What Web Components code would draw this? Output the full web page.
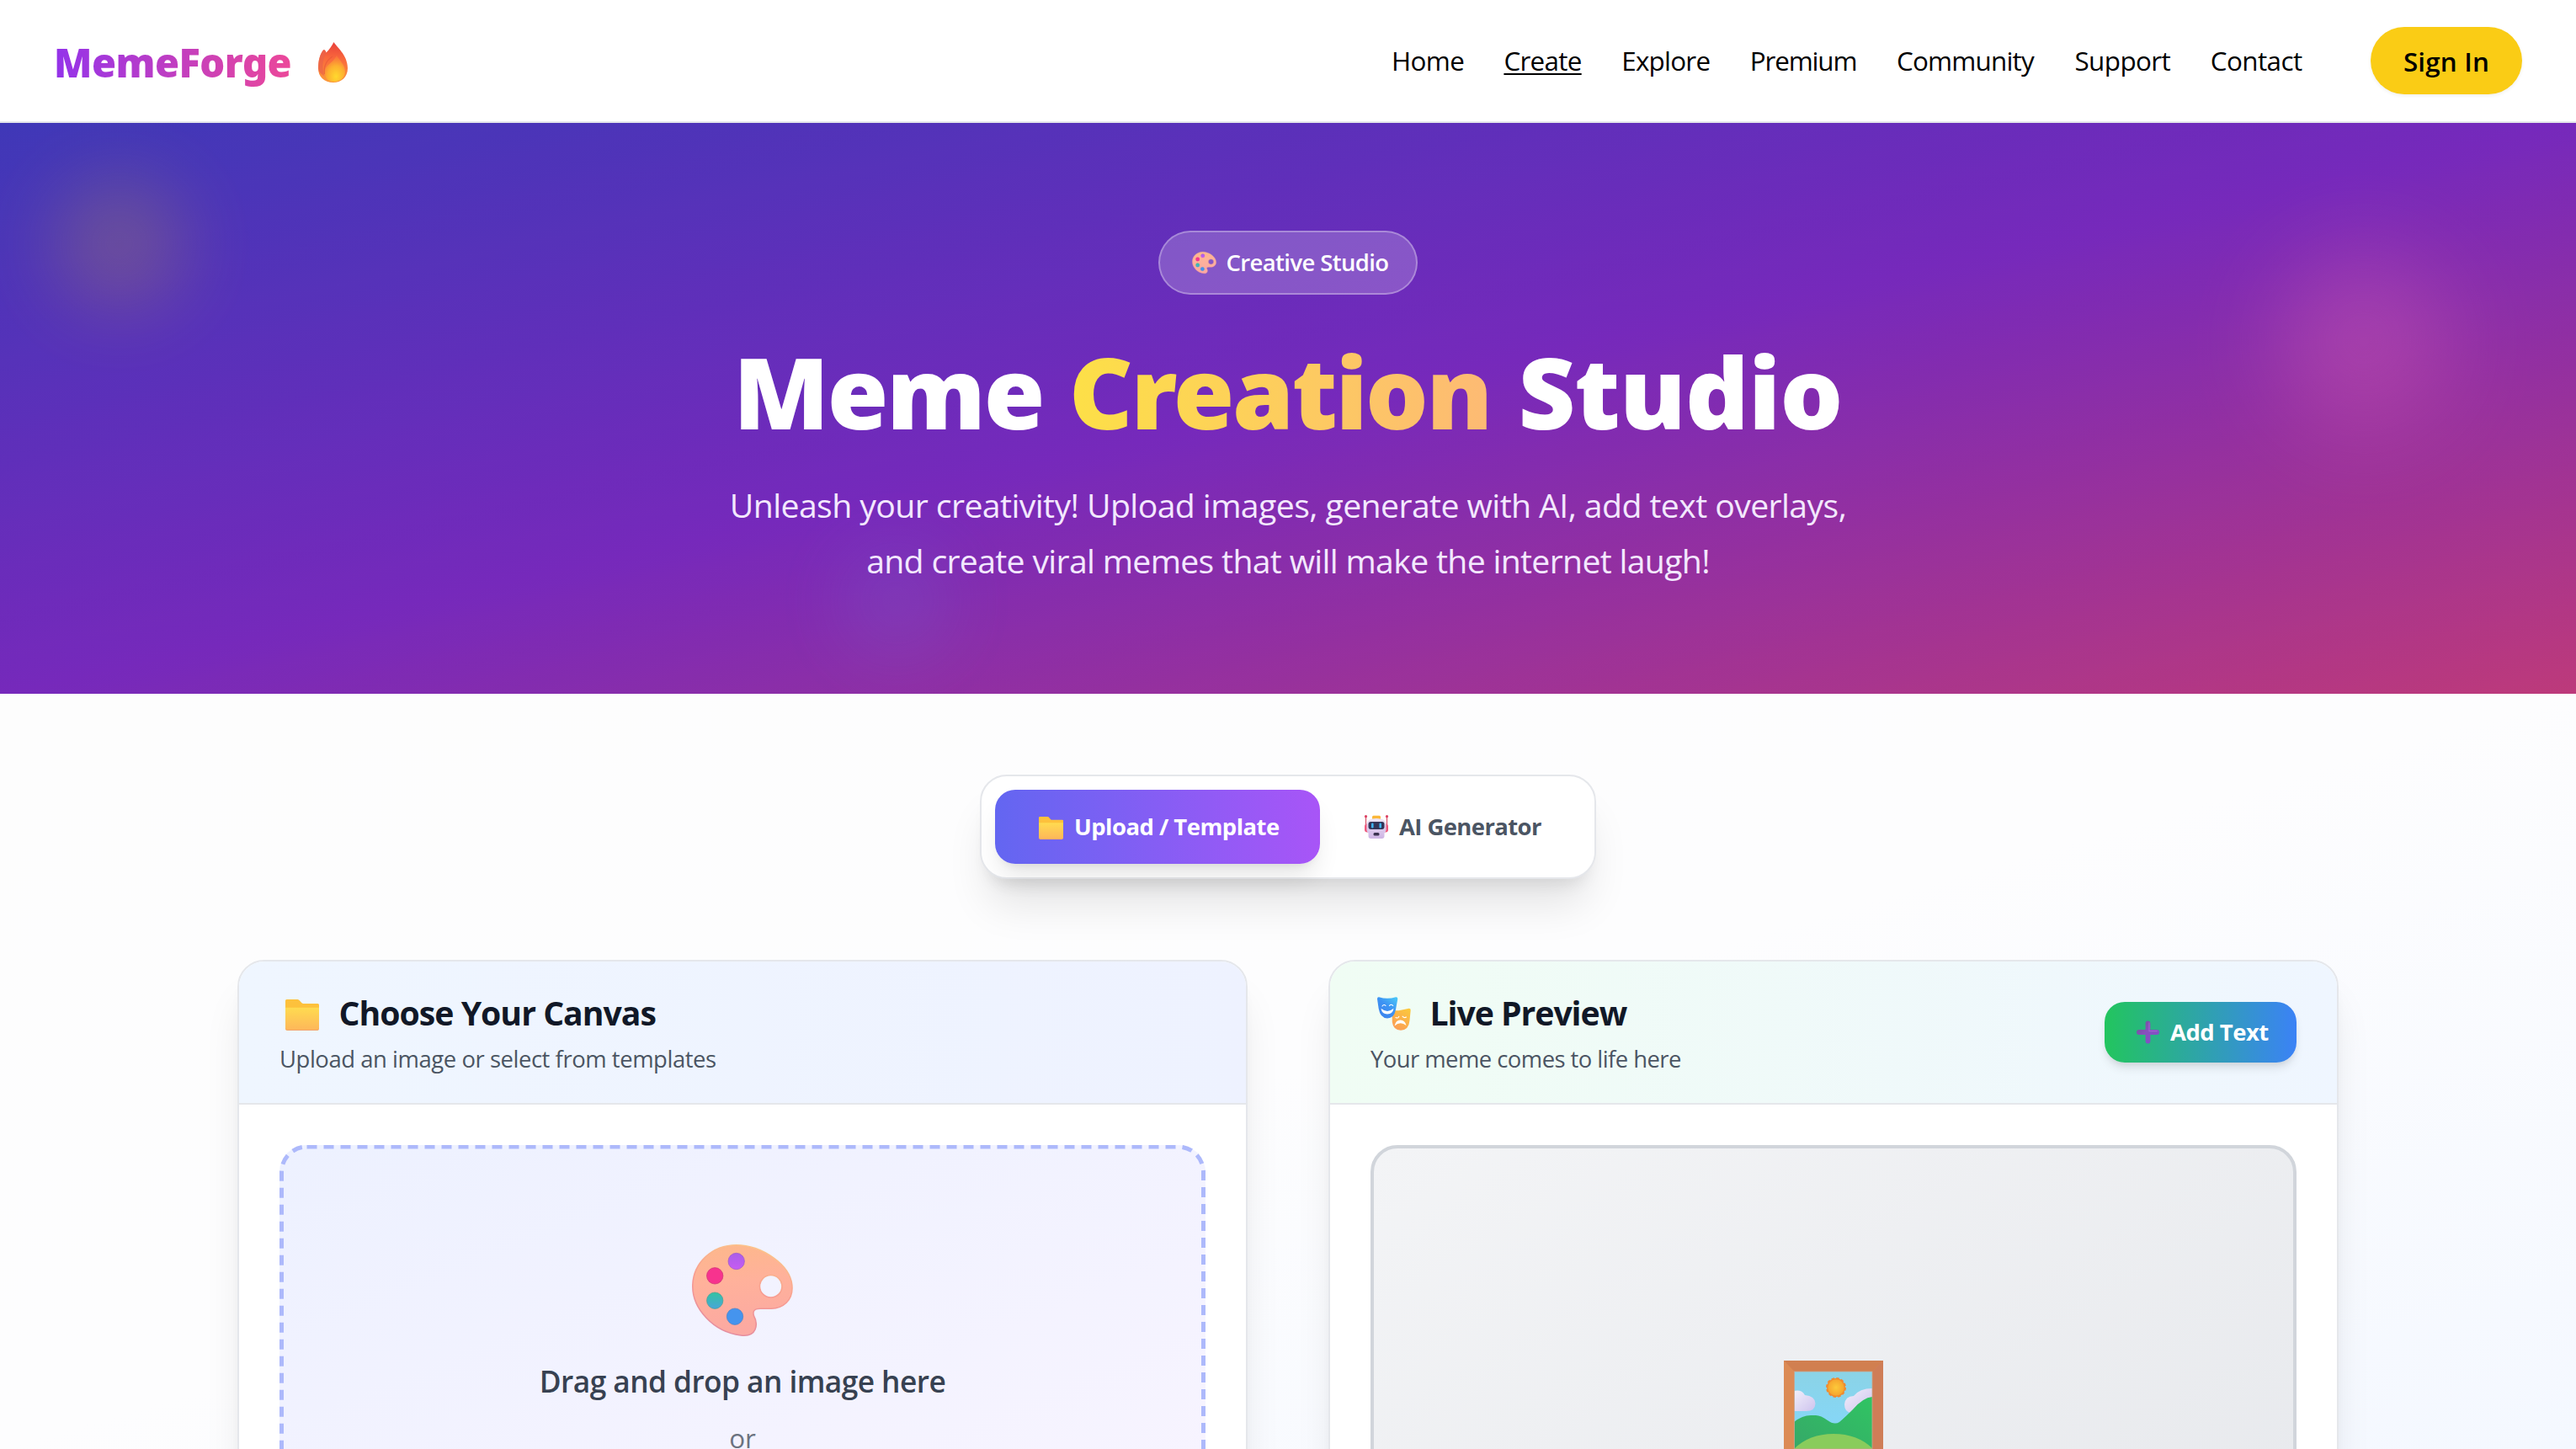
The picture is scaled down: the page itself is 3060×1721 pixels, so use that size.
<!DOCTYPE html>
<html lang="en">
<head>
<meta charset="utf-8">
<title>MemeForge – Meme Creation Studio</title>
<style>
  html, body { margin: 0; height: 1721px; overflow: hidden; }
  body { font-family: "Open Sans", "Noto Sans", sans-serif; color: #111827; background: #fff; }
</style>
</head>
<body>
<mf-app></mf-app>
<script>
const define = (name, markup, setup) => {
  const tpl = document.createElement('template');
  tpl.innerHTML = markup;
  customElements.define(name, class extends HTMLElement {
    constructor() {
      super();
      this.attachShadow({ mode: 'open' }).append(tpl.content.cloneNode(true));
    }
    connectedCallback() { if (setup) setup(this, this.shadowRoot); }
  });
};

/* ---------- icons ---------- */
const ICONS = {
  fire: `<svg viewBox="0 0 35 48"><defs>
    <linearGradient id="a" x1=".5" y1="0" x2=".45" y2="1"><stop offset="0" stop-color="#e8403c"/><stop offset=".4" stop-color="#f9683c"/><stop offset="1" stop-color="#fb9a3a"/></linearGradient>
    <radialGradient id="b" cx=".55" cy=".8" r=".75"><stop offset="0" stop-color="#ffd92e"/><stop offset=".55" stop-color="#fdb02f"/><stop offset="1" stop-color="#fb8038" stop-opacity=".6"/></radialGradient></defs>
    <path d="M18.500 0C21 5 35 15 35 31C35 42 27 48 18 48C7 48 0 41 0 31C0 23 2 14 6 9.500C8 8.500 9 11 9.500 12.500C13 9 16 5 18.500 0Z" fill="url(#a)"/>
    <path d="M6 9.500C8 8.500 9 11 9.500 12.500C6 19 4 27 7 40C2 37 0 34 0 30C0 22 2 14 6 9.500Z" fill="#ea6248" opacity=".7"/>
    <path d="M17 17C11 21 6 28 7.500 38" stroke="#e8583a" stroke-width="1.300" fill="none" opacity=".7"/>
    <path d="M22 16C25 21 32 27 32 35C32 42 26 47 19 47C11 47 7 42 8 34C9 27 17 25 22 16Z" fill="url(#b)"/></svg>`,
  palette: `<svg viewBox="0 0 120 109"><defs>
    <linearGradient id="a" x1=".4" y1="0" x2=".5" y2="1"><stop offset="0" stop-color="#fdb78c"/><stop offset=".4" stop-color="#ffb19b"/><stop offset="1" stop-color="#fba8a2"/></linearGradient>
    <linearGradient id="e" x1=".6" y1="0" x2=".3" y2="1"><stop offset="0" stop-color="#fcc488"/><stop offset=".5" stop-color="#f79a92"/><stop offset="1" stop-color="#e28ca0"/></linearGradient>
    <linearGradient id="t" x1="0" y1="0" x2="0" y2="1"><stop offset="0" stop-color="#34c3a2"/><stop offset="1" stop-color="#48a6d8"/></linearGradient>
    <linearGradient id="p" x1="0" y1="0" x2="0" y2="1"><stop offset="0" stop-color="#a95ee8"/><stop offset="1" stop-color="#c65cf4"/></linearGradient></defs>
    <path d="M52.700 .8C82 .8 119 24 119 52C119 66 109 76 94 76.300H81C73 76.500 72 80 73.500 85C77 91 77 96 75 101C72 108 66 109 58 108C25 104 .8 76 .8 50C.8 22 24 .8 52.700 .8ZM93.700 36.500A13.200 13.200 0 1 0 93.700 63A13.200 13.200 0 1 0 93.700 36.500Z" fill="url(#a)" fill-rule="evenodd" stroke="url(#e)" stroke-width="1.600"/>
    <circle cx="52.700" cy="20" r="9.700" fill="url(#p)" stroke="#9a58c8" stroke-width=".7"/><circle cx="27.200" cy="37.300" r="9.700" fill="#f7338e" stroke="#cc3573" stroke-width=".7"/>
    <circle cx="27.200" cy="66.700" r="9.700" fill="url(#t)" stroke="#4a9d92" stroke-width=".7"/><circle cx="51" cy="85.700" r="9.700" fill="#4594ee" stroke="#4a7fc4" stroke-width=".7"/></svg>`,
  folder: `<svg viewBox="0 0 40 37"><defs>
    <linearGradient id="a" x1="0" y1="0" x2="0" y2="1"><stop offset="0" stop-color="#ffdb50"/><stop offset="1" stop-color="#fdb65a"/></linearGradient></defs>
    <path d="M1.500 0H14.500Q16 0 17 1.500L19.500 4.200Q20.300 5 21.500 5H38.500Q40 5 40 6.500V20H0V1.500Q0 0 1.500 0Z" fill="#fdc13c"/>
    <path d="M0 9.800H40V34.500Q40 37 37.500 37H2.500Q0 37 0 34.500Z" fill="url(#a)"/>
    <path d="M.6 35.200Q1.200 36.500 2.500 36.500H37.500Q38.800 36.500 39.400 35.200" stroke="#f3a56c" stroke-width="1" fill="none"/></svg>`,
  robot: `<svg viewBox="0 0 28 28"><defs>
    <linearGradient id="a" x1="0" y1="0" x2="0" y2="1"><stop offset="0" stop-color="#efe6f6"/><stop offset="1" stop-color="#cdb4e4"/></linearGradient></defs>
    <path d="M1.500 2V12M26.500 2V12" stroke="#d9596f" stroke-width="1.300"/><circle cx="1.500" cy="1.700" r="1.600" fill="#dd4364"/><circle cx="26.500" cy="1.700" r="1.600" fill="#dd4364"/>
    <rect x="0" y="10.500" width="28" height="10" rx="3" fill="#ee5a7d"/>
    <rect x="9" y=".8" width="10" height="5" rx="1.500" fill="#fbb83a"/>
    <path d="M2.500 11Q2.500 4 14 4T25.500 11V18Q25 20.500 23.500 21.500V25Q23.500 28 20.500 28H7.500Q4.500 28 4.500 25V21.500Q3 20.500 2.500 18Z" fill="url(#a)"/>
    <rect x="4.500" y="8" width="19" height="9" rx="3" fill="#343457"/>
    <rect x="8" y="9.500" width="2.600" height="6" rx="1.300" fill="#3fb3f0"/><rect x="17.400" y="9.500" width="2.600" height="6" rx="1.300" fill="#3fb3f0"/>
    <rect x="10.500" y="21" width="7" height="3.400" rx="1.500" fill="#3b3350"/></svg>`,
  masks: `<svg viewBox="0 0 40 40"><defs>
    <linearGradient id="a" x1="1" y1="0" x2=".2" y2="1"><stop offset="0" stop-color="#4ccdf8"/><stop offset=".5" stop-color="#3d93f3"/><stop offset="1" stop-color="#3c82ec"/></linearGradient>
    <linearGradient id="b" x1=".9" y1="0" x2=".3" y2="1"><stop offset="0" stop-color="#fbc93c"/><stop offset="1" stop-color="#fb9e56"/></linearGradient></defs>
    <path d="M17.500 15.500Q22 17 28 15.800Q33 15 37.500 13.800Q39.800 13.500 39.700 16L38.500 28Q37.500 39.500 28 39.700Q19 39.500 17.800 30Z" fill="url(#b)"/>
    <path d="M2 .2Q12 3.500 22 .2Q24.500 0 24.300 2.500L22 15Q20 25.500 12 25.500Q3.500 25 1.700 14L0 2.500Q0 0 2 .2Z" fill="url(#a)"/>
    <g fill="none" stroke="#fff" stroke-linecap="round"><path d="M6 11Q8 8.300 10 10.500M14.500 10.500Q16.500 8 18.700 10.500" stroke-width="1.100"/><path d="M22 24.500Q24.500 26 25.800 23.200M30 23.200Q32 25.500 34.500 24" stroke-width="1.100"/></g>
    <path d="M4.500 13.800Q12 20 19.500 13.800Q18.500 20.500 12 20.500Q5.500 20.500 4.500 13.800Z" fill="#fff"/>
    <path d="M20.500 34.500Q22 27.500 27.500 27.500Q33 27.500 34.500 34Q27.500 28.500 20.500 34.500Z" fill="#fff"/></svg>`,
  plus: `<svg viewBox="0 0 28 28"><defs>
    <linearGradient id="a" gradientUnits="userSpaceOnUse" x1="0" y1="0" x2="28" y2="28"><stop offset="0" stop-color="#6d5590"/><stop offset=".45" stop-color="#8750bd"/><stop offset="1" stop-color="#7d51cc"/></linearGradient></defs>
    <path d="M11 3Q11 0 14 0T17 3V11H25Q28 11 28 14T25 17H17V25Q17 28 14 28T11 25V17H3Q0 17 0 14T3 11H11Z" fill="url(#a)"/>
    <path d="M15.500 2V12.500H25.500" stroke="#a968d6" stroke-width="1.200" fill="none" opacity=".7"/></svg>`,
  picture: `<svg viewBox="0 0 118 118"><defs>
    <linearGradient id="s" x1="0" y1="0" x2="0" y2="1"><stop offset="0" stop-color="#8bd3e6"/><stop offset=".6" stop-color="#86d6f5"/></linearGradient>
    <linearGradient id="g" x1="1" y1="0" x2="0" y2="1"><stop offset="0" stop-color="#30c463"/><stop offset="1" stop-color="#36a868"/></linearGradient>
    <linearGradient id="c" x1="0" y1="0" x2="1" y2="1"><stop offset="0" stop-color="#f2effa"/><stop offset="1" stop-color="#cdc3ee"/></linearGradient>
    <radialGradient id="u"><stop offset="0" stop-color="#fcc93a"/><stop offset="1" stop-color="#f6a32e"/></radialGradient>
    <clipPath id="k"><rect x="12.500" y="13" width="92.500" height="92"/></clipPath></defs>
    <rect width="118" height="118" fill="#d98856"/>
    <path d="M0 0H118L105 13H12.500Z" fill="#d17f50"/><path d="M118 0V118L105 105V13Z" fill="#cf7d57"/><path d="M0 0L12.500 13V105L0 118Z" fill="#dc8b55"/><path d="M0 118L12.500 105H105L118 118Z" fill="#c9744c"/>
    <g clip-path="url(#k)"><rect x="12" y="13" width="94" height="93" fill="url(#s)"/>
    <path d="M12 36Q21 34 25 41Q37 42 37.500 51Q37 60 27 60H12Z" fill="url(#c)"/>
    <path d="M72 52Q73 42 83 42Q90 33 105 33V62H79Q72 60 72 52Z" fill="url(#c)"/>
    <path d="M12 73Q22 65 32 65H38Q44 65 52 71Q60 77 66 73Q73 67 82 58Q94 44 105 43V106H12Z" fill="url(#g)"/>
    <path d="M12 105Q30 87 59 87Q88 87 106 105V118H12Z" fill="#89cc5c"/></g>
    <circle cx="62" cy="32" r="10.700" fill="none" stroke="#ee8a35" stroke-width="2.600" stroke-dasharray="3.400 2.200"/><circle cx="62" cy="32" r="10.300" fill="url(#u)" stroke="#f08a2e" stroke-width="1.200"/>
    <rect x="12.500" y="13" width="92.500" height="92" fill="none" stroke="#c8a58c" stroke-width=".8"/></svg>`
};
define('mf-icon', `<style>
  :host { display: inline-block; flex: none; }
  div { width: 100%; height: 100%; }
  svg { display: block; width: 100%; height: 100%; overflow: visible; }
</style><div></div>`, (el, root) => {
  root.querySelector('div').innerHTML = ICONS[el.getAttribute('name')];
});

/* ---------- header ---------- */
define('mf-nav-link', `<style>
  :host { display: block; font-size: 31.400px; line-height: 48px; color: #000; white-space: nowrap; }
  :host([active]) { text-decoration: underline; text-decoration-thickness: 2px; text-underline-offset: 3px; }
</style><slot></slot>`);

define('mf-header', `<style>
  :host { display: flex; align-items: center; justify-content: space-between; box-sizing: border-box;
          height: 146px; padding: 0 64px 0 64px; background: #fff; border-bottom: 2px solid #e5e7eb; }
  .logo { display: flex; align-items: center; gap: 32px; padding-top: 4px; }
  .name { font: 900 47px/64px "Noto Sans", sans-serif; letter-spacing: -.5px; color: transparent;
          background: linear-gradient(to right, #9333ea, #ec4899); background-clip: text; -webkit-background-clip: text; }
  .fire { width: 35px; height: 48px; }
  .right { display: flex; align-items: center; gap: 81.500px; }
  nav { display: flex; gap: 47.600px; }
  button { all: unset; box-sizing: border-box; width: 180px; height: 80px; border-radius: 40px; background: #facc15;
           text-align: center; font-size: 31.400px; font-weight: 600; letter-spacing: .17px; color: #000;
           box-shadow: 0 2px 4px rgba(0,0,0,.06); }
</style>
<div class="logo"><span class="name">MemeForge</span><mf-icon class="fire" name="fire"></mf-icon></div>
<div class="right">
  <nav>
    <mf-nav-link style="letter-spacing:-.6px;margin-right:-.5px">Home</mf-nav-link>
    <mf-nav-link active style="letter-spacing:-.7px">Create</mf-nav-link>
    <mf-nav-link style="letter-spacing:-.77px">Explore</mf-nav-link>
    <mf-nav-link style="letter-spacing:-1.160px">Premium</mf-nav-link>
    <mf-nav-link style="letter-spacing:-.8px;margin-right:1px">Community</mf-nav-link>
    <mf-nav-link style="letter-spacing:-.58px">Support</mf-nav-link>
    <mf-nav-link style="letter-spacing:-.58px">Contact</mf-nav-link>
  </nav>
  <button>Sign In</button>
</div>`);

/* ---------- hero ---------- */
define('mf-hero', `<style>
  :host { display: flex; flex-direction: column; align-items: center; position: relative; overflow: hidden;
          box-sizing: border-box; height: 678px; padding-top: 128px; text-align: center; color: #fff;
          background: linear-gradient(rgba(0,0,0,.2), rgba(0,0,0,.2)), linear-gradient(to bottom right, #4f46e5, #9333ea, #ec4899); }
  .blob { position: absolute; border-radius: 50%; }
  .y { left: 66px; top: 68px; width: 152px; height: 152px; background: #facc15; opacity: .19; filter: blur(46px); }
  .p { left: 2704px; top: 156px; width: 208px; height: 208px; background: #f472b6; opacity: .27; filter: blur(56px); }
  .b { left: 1001px; top: 504px; width: 128px; height: 128px; background: #60a5fa; opacity: .12; filter: blur(44px); }
  .badge { display: flex; align-items: center; justify-content: center; gap: 12px; box-sizing: border-box; width: 308px; height: 76px;
           padding-left: 5px; border: 2px solid rgba(255,255,255,.3); border-radius: 38px; background: rgba(255,255,255,.2);
           font-size: 27.440px; font-weight: 600; letter-spacing: -.6px; position: relative; }
  .badge mf-icon { width: 29px; height: 26px; }
  .badge span { margin-top: -2px; }
  h1 { margin: 54px 0 0; font: 900 117.600px/120px "Noto Sans", sans-serif; white-space: nowrap; position: relative; }
  h1 span { display: inline-block; }
  .g { color: transparent; background: linear-gradient(to right, #fde047, #fdba74); background-clip: text; -webkit-background-clip: text; }
  p { margin: 43px 0 0; font-size: 39.200px; line-height: 66px; color: #f3e8ff; position: relative; }
</style>
<div class="blob y"></div><div class="blob p"></div><div class="blob b"></div>
<div class="badge"><mf-icon name="palette"></mf-icon><span>Creative Studio</span></div>
<h1><span style="letter-spacing:-2.200px">Meme</span> <span class="g" style="letter-spacing:-2.500px">Creation</span> <span style="letter-spacing:-.7px;margin-left:2px">Studio</span></h1>
<p><span style="letter-spacing:-.576px">Unleash your creativity! Upload images, generate with AI, add text overlays,</span><br><span style="letter-spacing:-.673px">and create viral memes that will make the internet laugh!</span></p>`);

/* ---------- tabs ---------- */
define('mf-tab', `<style>
  :host { display: flex; align-items: center; gap: 13px; box-sizing: border-box; height: 88px; padding: 0 0 0 52px;
          border-radius: 24px; font-size: 27.440px; font-weight: 700; color: #4b5563; white-space: nowrap; }
  :host([active]) { color: #fff; background: linear-gradient(to right, #6366f1, #a855f7);
          box-shadow: 0 20px 30px -6px rgba(0,0,0,.1), 0 8px 12px -8px rgba(0,0,0,.1); }
  .l { margin-top: -2px; }
</style><slot name="icon"></slot><span class="l"><slot></slot></span>`);

define('mf-tabs', `<style>
  :host { display: flex; box-sizing: border-box; width: 732px; height: 124px; padding: 16px; border: 2px solid #e5e7eb;
          border-radius: 32px; background: #fff; box-shadow: 0 40px 50px -10px rgba(0,0,0,.1), 0 16px 20px -12px rgba(0,0,0,.1); }
  .f { width: 29px; height: 27px; margin-top: 2px; } .r { width: 28px; height: 28px; }
</style>
<mf-tab active style="width:386px;letter-spacing:-.515px"><mf-icon slot="icon" class="f" name="folder"></mf-icon>Upload / Template</mf-tab>
<mf-tab style="width:310px;padding-left:53px;letter-spacing:-.58px"><mf-icon slot="icon" class="r" name="robot"></mf-icon>AI Generator</mf-tab>`);

/* ---------- cards ---------- */
define('mf-card', `<style>
  :host { display: flex; flex-direction: column; box-sizing: border-box; width: 1200px; height: 900px; overflow: hidden;
          border: 2px solid #e5e7eb; border-radius: 32px; background: #fff;
          box-shadow: 0 40px 50px -10px rgba(0,0,0,.1), 0 16px 20px -12px rgba(0,0,0,.1); }
  header { display: flex; justify-content: space-between; align-items: center; box-sizing: border-box; height: 170px; flex: none;
           padding: 0 48px; border-bottom: 2px solid #e5e7eb; background: var(--head); }
  .t { display: flex; align-items: center; height: 56px; font-size: 39.200px; font-weight: 700; color: #111827; }
  .ico { display: flex; width: 70.500px; }
  .s { margin-top: 7px; line-height: 40px; font-size: 27.440px; color: #4b5563; }
  .body { display: flex; flex-direction: column; padding: 48px; }
</style>
<header>
  <div><div class="t"><span class="ico"><slot name="icon"></slot></span><slot name="title"></slot></div>
  <div class="s"><slot name="sub"></slot></div></div>
  <slot name="action"></slot>
</header>
<div class="body"><slot></slot></div>`);

define('mf-add-button', `<style>
  :host { display: flex; align-items: center; box-sizing: border-box; width: 228px; height: 72px; padding-left: 38px; gap: 13px;
          border-radius: 24px; color: #fff; font-size: 27.440px; font-weight: 700; letter-spacing: -.5px;
          background: linear-gradient(to right, #22c55e, #3b82f6);
          box-shadow: 0 8px 12px -2px rgba(0,0,0,.1), 0 4px 8px -4px rgba(0,0,0,.1); }
  mf-icon { width: 27px; height: 28px; }
  .l { margin-top: -2px; }
</style><mf-icon name="plus"></mf-icon><span class="l"><slot></slot></span>`);

define('mf-dropzone', `<style>
  :host { display: grid; height: 453.750px; border-radius: 32px; background: linear-gradient(to bottom right, #edf1ff, #f8f4ff); }
  .frame { grid-area: 1 / 1; width: 100%; height: 100%; }
  .in { grid-area: 1 / 1; display: flex; flex-direction: column; align-items: center; padding-top: 118px; }
  mf-icon { width: 120px; height: 109px; }
  .a { margin-top: 25px; font-size: 35.280px; line-height: 56px; font-weight: 600; letter-spacing: -.552px; color: #374151; }
  .o { margin-top: 27px; font-size: 31.400px; line-height: 26px; color: #6b7280; }
</style>
<svg class="frame"><rect x="2.500" y="2" width="1095" height="449.750" rx="30" fill="none" stroke="#adb9fb" stroke-width="5" stroke-dasharray="12 8"/></svg>
<div class="in"><mf-icon name="palette"></mf-icon><div class="a">Drag and drop an image here</div><div class="o">or</div></div>`);

define('mf-preview', `<style>
  :host { display: flex; justify-content: center; align-items: flex-start; box-sizing: border-box; height: 700px; padding-top: 252px;
          border: 4px solid #d1d5db; border-radius: 32px; background: linear-gradient(to bottom right, #f3f4f6, #e5e7eb); }
  mf-icon { width: 118px; height: 118px; }
</style><mf-icon name="picture"></mf-icon>`);

/* ---------- page ---------- */
define('mf-app', `<style>
  :host { display: flex; flex-direction: column; width: 3060px; height: 1721px; overflow: hidden; }
  main { flex: 1; min-height: 0; display: flex; flex-direction: column; align-items: center; gap: 96px; padding-top: 96px;
         background: linear-gradient(to bottom right, #fdfdfd, #fdfdfe 50%, #f4f8ff); }
  mf-tabs { flex: none; }
  .cards { display: flex; gap: 96px; }
  .folder { width: 40px; height: 37px; margin: 6px 0 0 7px; }
  .masks { width: 40px; height: 40px; margin: 2px 0 0 8px; }
</style>
<mf-header></mf-header>
<mf-hero></mf-hero>
<main>
  <mf-tabs></mf-tabs>
  <div class="cards">
    <mf-card style="--head:linear-gradient(to right,#eff6ff,#eef2ff)">
      <mf-icon slot="icon" class="folder" name="folder"></mf-icon>
      <span slot="title" style="letter-spacing:-.99px">Choose Your Canvas</span>
      <span slot="sub" style="letter-spacing:-.449px">Upload an image or select from templates</span>
      <mf-dropzone></mf-dropzone>
    </mf-card>
    <mf-card style="--head:linear-gradient(to right,#f0fdf4,#eff6ff)">
      <mf-icon slot="icon" class="masks" name="masks"></mf-icon>
      <span slot="title" style="letter-spacing:-1.050px">Live Preview</span>
      <span slot="sub" style="letter-spacing:-.552px">Your meme comes to life here</span>
      <mf-add-button slot="action">Add Text</mf-add-button>
      <mf-preview></mf-preview>
    </mf-card>
  </div>
</main>`);
</script>
</body>
</html>
